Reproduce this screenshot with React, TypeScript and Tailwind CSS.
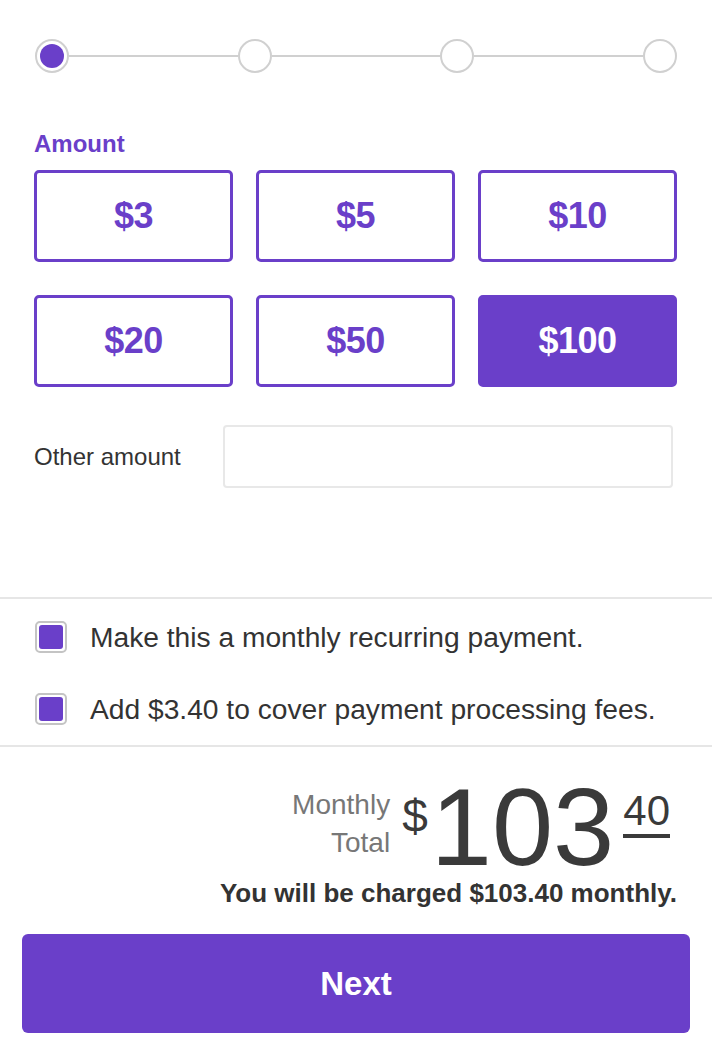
import React, { useState } from 'react';

const amounts = [3, 5, 10, 20, 50, 100];

function Stepper() {
  return (
    <div className="flex items-center px-[35px] pt-[39px]">
      <div className="w-[34px] h-[34px] rounded-full border-2 border-[#d0d0d0] flex items-center justify-center shrink-0">
        <div className="w-[24px] h-[24px] rounded-full bg-[#6a3fc9]" />
      </div>
      <div className="flex-1 h-[2px] bg-[#d0d0d0]" />
      <div className="w-[34px] h-[34px] rounded-full border-2 border-[#d0d0d0] shrink-0" />
      <div className="flex-1 h-[2px] bg-[#d0d0d0]" />
      <div className="w-[34px] h-[34px] rounded-full border-2 border-[#d0d0d0] shrink-0" />
      <div className="flex-1 h-[2px] bg-[#d0d0d0]" />
      <div className="w-[34px] h-[34px] rounded-full border-2 border-[#d0d0d0] shrink-0" />
    </div>
  );
}

function Checkbox({ label }: { label: string }) {
  return (
    <div className="h-[72px] flex items-center px-[35px]">
      <div className="w-[32px] h-[32px] rounded-[5px] border-2 border-[#c4c4c4] p-[2px] shrink-0">
        <div className="w-full h-full rounded-[3px] bg-[#6a3fc9]" />
      </div>
      <span className="ml-[23px] text-[28.2px] text-[#333]">{label}</span>
    </div>
  );
}

export default function App() {
  const [selected, setSelected] = useState(100);

  return (
    <div className="w-[712px] h-[1059px] bg-white font-['Liberation_Sans',Arial,sans-serif] overflow-hidden">
      <Stepper />

      <div className="px-[34px] pr-[35px]">
        <div className="mt-[57px] mb-[12px] text-[24px] leading-[28px] font-bold text-[#6a3fc9]">Amount</div>
        <div className="grid grid-cols-3 gap-x-[23px] gap-y-[33px]">
          {amounts.map((a) => (
            <button
              key={a}
              onClick={() => setSelected(a)}
              className={
                a === selected
                  ? 'h-[92px] rounded-[5px] border-[3px] border-[#6a3fc9] bg-[#6a3fc9] text-white text-[36px] tracking-[-0.5px] font-bold'
                  : 'h-[92px] rounded-[5px] border-[3px] border-[#6a3fc9] bg-white text-[#6a3fc9] text-[36px] tracking-[-0.5px] font-bold'
              }
            >
              ${a}
            </button>
          ))}
        </div>

        <div className="mt-[38px] flex items-center">
          <span className="text-[24px] text-[#333] w-[189px] shrink-0">Other amount</span>
          <input className="h-[63px] w-[450px] rounded-[4px] border-2 border-[#e8e8e8] outline-none px-3 text-[24px]" />
        </div>
      </div>

      <div className="mt-[109px] border-t-2 border-b-2 border-[#e6e6e6] pt-[2px]">
        <Checkbox label="Make this a monthly recurring payment." />
        <Checkbox label="Add $3.40 to cover payment processing fees." />
      </div>

      <div className="pt-[27px] pr-[42px] flex justify-end items-start text-[#3a3a3a]">
        <div className="mt-[12px] text-right text-[28px] leading-[38px] text-[#777]">
          <div>Monthly</div>
          <div>Total</div>
        </div>
        <div className="ml-[12px] mt-[19px] text-[46px] leading-none">$</div>
        <div className="ml-[3px] mt-[8px] text-[110px] leading-[90px]">103</div>
        <div className="ml-[9px] mt-[16px] text-[42px] leading-none pb-[2px] border-b-4 border-[#3a3a3a]">40</div>
      </div>
      <div className="pr-[35px] mt-[6px] text-right text-[26px] leading-[30px] font-bold text-[#333]">
        You will be charged $103.40 monthly.
      </div>

      <div className="px-[22px] mt-[26px]">
        <button className="w-full h-[99px] rounded-[6px] bg-[#6a3fc9] text-white text-[33px] font-bold">Next</button>
      </div>
    </div>
  );
}
